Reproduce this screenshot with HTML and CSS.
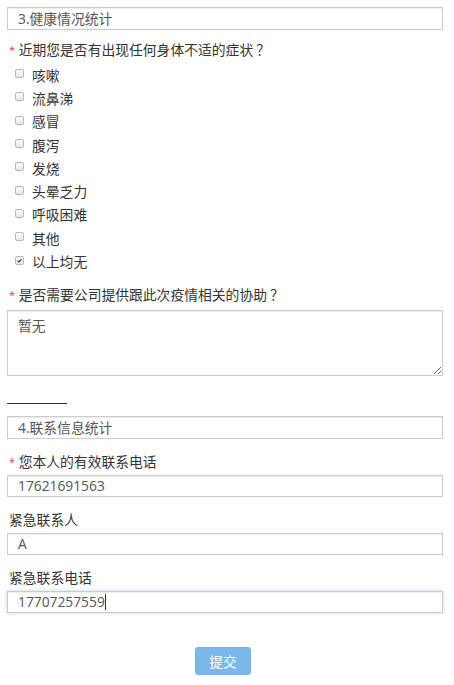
FILE: index.html
```html
<!DOCTYPE html>
<html lang="zh-CN">
<head>
<meta charset="utf-8">
<title>健康情况统计</title>
<link rel="stylesheet" href="styles.css">
</head>
<body>
<form class="page">
  <div class="box section-title">3.健康情况统计</div>

  <div class="label first-q"><span class="req">*</span> 近期您是否有出现任何身体不适的症状<span class="qm">？</span></div>
  <ul class="options">
    <li><span class="cb"></span>咳嗽</li>
    <li><span class="cb"></span>流鼻涕</li>
    <li><span class="cb"></span>感冒</li>
    <li><span class="cb"></span>腹泻</li>
    <li><span class="cb"></span>发烧</li>
    <li><span class="cb"></span>头晕乏力</li>
    <li><span class="cb"></span>呼吸困难</li>
    <li><span class="cb"></span>其他</li>
    <li><span class="cb checked"><svg viewBox="0 0 9 9" width="9" height="9"><path d="M2 4.6 L3.8 6.4 L7 2.6" fill="none" stroke="#333" stroke-width="1.5"/></svg></span>以上均无</li>
  </ul>

  <div class="label second-q"><span class="req">*</span> 是否需要公司提供跟此次疫情相关的协助<span class="qm">？</span></div>
  <textarea class="box area">暂无</textarea>

  <div class="divider"></div>

  <div class="box section-title title-2">4.联系信息统计</div>

  <div class="label field-label"><span class="req">*</span> 您本人的有效联系电话</div>
  <div class="box field">17621691563</div>

  <div class="label field-label">紧急联系人</div>
  <div class="box field">A</div>

  <div class="label field-label">紧急联系电话</div>
  <div class="box field focused">17707257559<span class="caret"></span></div>

  <div class="actions">
    <button type="button" class="submit">提交</button>
  </div>
</form>
</body>
</html>
```

FILE: styles.css
```css
* {
  box-sizing: border-box;
}

body {
  margin: 0;
  background: #fff;
  font-family: "Open Sans", "Noto Sans CJK SC", sans-serif;
  font-size: 13.8px;
  color: #333;
}

.page {
  padding: 7px 11px 0 7px;
}

.box {
  display: block;
  width: 100%;
  border: 1px solid #ccc;
  background: #fff;
  box-shadow: inset 0 1px 1px rgba(0, 0, 0, 0.075);
  color: #555;
  font-family: inherit;
  font-size: 13.8px;
}

.section-title {
  height: 23px;
  line-height: 21px;
  padding-left: 10px;
}

.label {
  height: 20px;
  line-height: 20px;
  padding-left: 2px;
  color: #333;
  white-space: nowrap;
}

.req {
  color: #e4393c;
  font-size: 11px;
  line-height: 10px;
  vertical-align: 1px;
}

.qm {
  font-family: "Noto Sans CJK SC", sans-serif;
  line-height: 10px;
  padding-left: 3px;
}

.first-q {
  margin-top: 10px;
}

.options {
  list-style: none;
  margin: 3px 0 0 0;
  padding: 0 0 0 8px;
}

.options li {
  display: flex;
  align-items: center;
  height: 23.3px;
  color: #333;
}

.cb {
  width: 9px;
  height: 9px;
  margin-right: 8px;
  border: 1px solid #b8b8b8;
  border-radius: 2px;
  background: linear-gradient(#fdfdfd, #e8e8e8);
  display: flex;
  align-items: center;
  justify-content: center;
  position: relative;
  top: -1px;
}

.cb svg {
  display: block;
}

.second-q {
  margin-top: 12px;
}

.area {
  margin-top: 5px;
  height: 66px;
  padding: 5px 10px;
  line-height: 20px;
  resize: vertical;
  outline: none;
}

.divider {
  width: 60px;
  height: 1px;
  background: #333;
  margin-top: 27px;
}

.title-2 {
  margin-top: 12px;
}

.field-label {
  margin-top: 13px;
}

.field {
  margin-top: 3px;
  height: 22px;
  line-height: 20px;
  padding-left: 10px;
}

.focused {
  box-shadow: inset 0 1px 1px rgba(0, 0, 0, 0.075), 0 0 4px rgba(102, 175, 233, 0.45);
}

.caret {
  display: inline-block;
  width: 1px;
  height: 16px;
  background: #333;
  vertical-align: -3px;
}

.actions {
  display: flex;
  justify-content: center;
  margin-top: 34px;
}

.submit {
  width: 56px;
  height: 28px;
  border: 1px solid #76b4ea;
  border-radius: 3px;
  background: #7ab8ec;
  color: #fff;
  font-family: inherit;
  font-size: 13.8px;
  padding: 0;
  margin-right: 4px;
}
```
